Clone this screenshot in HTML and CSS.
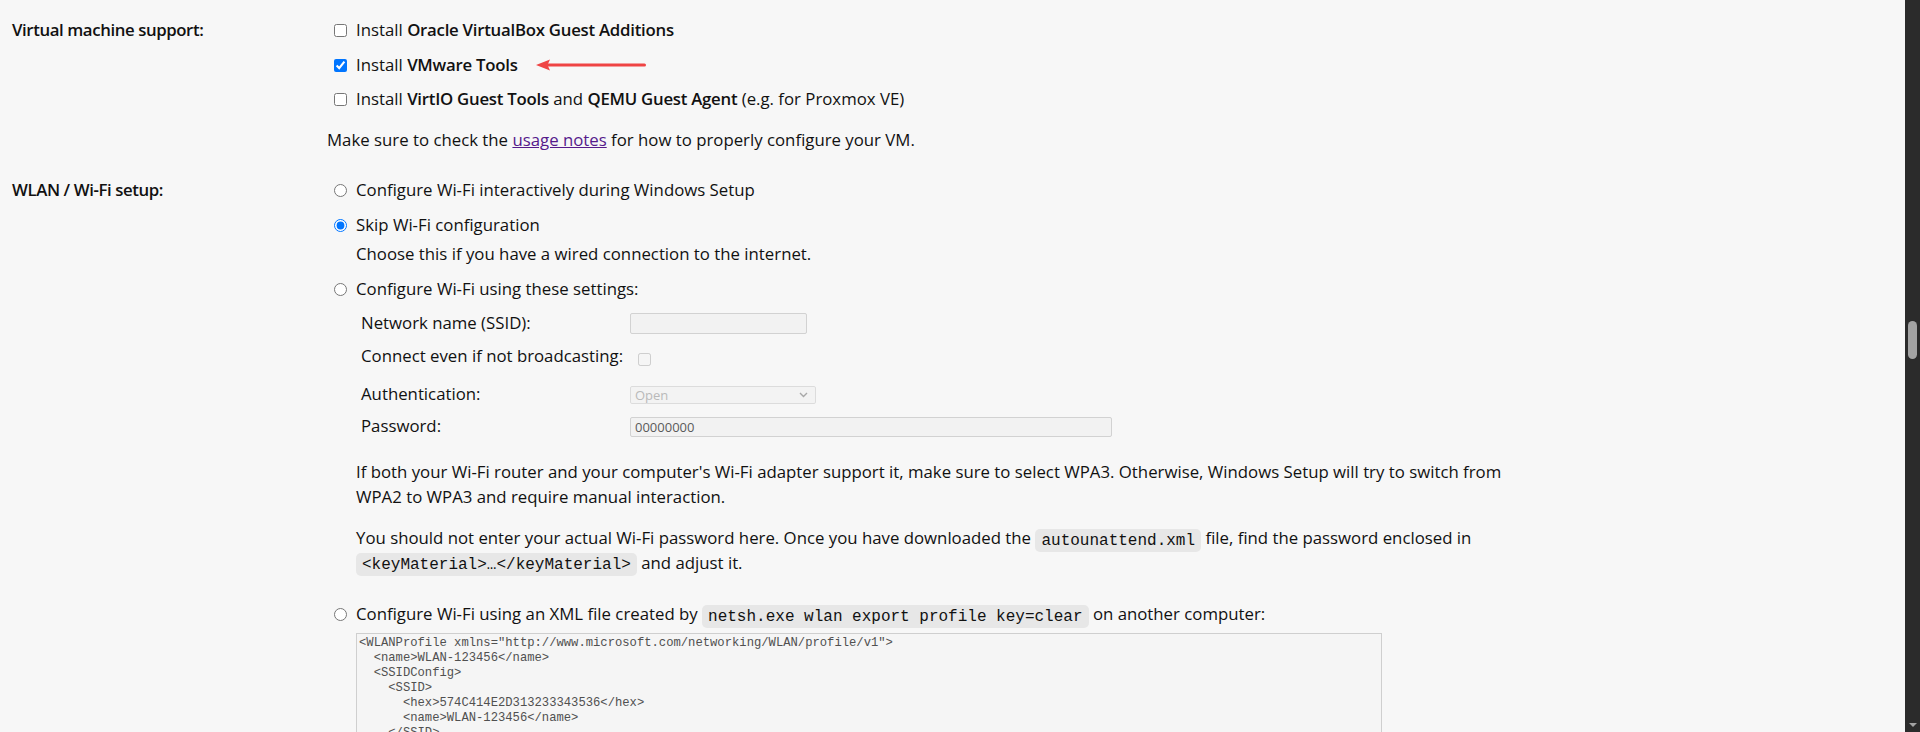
FILE: index.html
```html
<!DOCTYPE html>
<html lang="en">
<head>
<meta charset="utf-8">
<title>Windows answer file settings</title>
<link rel="stylesheet" href="styles.css">
</head>
<body>
<div class="window">
  <main class="page">
    <section class="setting vm">
      <div class="label">Virtual machine support:</div>
      <div class="content">
        <label class="opt"><input type="checkbox"><span>Install <b>Oracle VirtualBox Guest Additions</b></span></label>
        <label class="opt"><input type="checkbox" checked><span>Install <b>VMware Tools</b></span><svg class="arrow" width="110" height="12" viewBox="0 0 110 12"><path d="M0 6 L14 0.5 L11.5 6 L14 11.5 Z" fill="#ef4444"/><line x1="11" y1="6" x2="108.5" y2="6" stroke="#ef4444" stroke-width="3" stroke-linecap="round"/></svg></label>
        <label class="opt"><input type="checkbox"><span>Install <b>VirtIO Guest Tools</b> and <b>QEMU Guest Agent</b> (e.g. for Proxmox VE)</span></label>
        <p class="note">Make sure to check the <a href="#usage">usage notes</a> for how to properly configure your VM.</p>
      </div>
    </section>
    <section class="setting wlan">
      <div class="label">WLAN / Wi‑Fi setup:</div>
      <div class="content">
        <label class="opt"><input type="radio" name="wifi"><span>Configure Wi‑Fi interactively during Windows Setup</span></label>
        <label class="opt"><input type="radio" name="wifi" checked><span>Skip Wi‑Fi configuration</span></label>
        <p class="sub">Choose this if you have a wired connection to the internet.</p>
        <label class="opt r3"><input type="radio" name="wifi"><span>Configure Wi‑Fi using these settings:</span></label>
        <div class="fields">
          <label class="f-label" for="ssid">Network name (SSID):</label>
          <input id="ssid" class="text ssid" type="text" disabled>
          <label class="f-label" for="bc">Connect even if not broadcasting:</label>
          <input id="bc" class="bcast" type="checkbox" disabled>
          <label class="f-label" for="auth">Authentication:</label>
          <div class="select-wrap">
            <select id="auth" class="auth" disabled><option>Open</option></select>
            <svg class="chev" width="9" height="6" viewBox="0 0 9 6"><path d="M1 1 L4.5 4.5 L8 1" fill="none" stroke="#a8a8a8" stroke-width="1.4"/></svg>
          </div>
          <label class="f-label" for="pw">Password:</label>
          <input id="pw" class="text pw" type="text" value="00000000" disabled>
        </div>
        <p class="sub para p1">If both your Wi‑Fi router and your computer's Wi‑Fi adapter support it, make sure to select WPA3. Otherwise, Windows Setup will try to switch from WPA2 to WPA3 and require manual interaction.</p>
        <p class="sub para p2">You should not enter your actual Wi‑Fi password here. Once you have downloaded the <code>autounattend.xml</code> file, find the password enclosed in <code>&lt;keyMaterial&gt;…&lt;/keyMaterial&gt;</code> and adjust it.</p>
        <label class="opt r4"><input type="radio" name="wifi"><span>Configure Wi‑Fi using an XML file created by <code>netsh.exe wlan export profile key=clear</code> on another computer:</span></label>
        <textarea class="xml" disabled spellcheck="false">&lt;WLANProfile xmlns="http://www.microsoft.com/networking/WLAN/profile/v1"&gt;
  &lt;name&gt;WLAN-123456&lt;/name&gt;
  &lt;SSIDConfig&gt;
    &lt;SSID&gt;
      &lt;hex&gt;574C414E2D313233343536&lt;/hex&gt;
      &lt;name&gt;WLAN-123456&lt;/name&gt;
    &lt;/SSID&gt;
  &lt;/SSIDConfig&gt;
  &lt;connectionType&gt;ESS&lt;/connectionType&gt;
  &lt;connectionMode&gt;auto&lt;/connectionMode&gt;
&lt;/WLANProfile&gt;</textarea>
      </div>
    </section>
  </main>
  <div class="scrollbar"><div class="thumb"></div><div class="down"></div></div>
</div>
</body>
</html>
```

FILE: styles.css
```css
* { box-sizing: border-box; }
html, body { margin: 0; height: 100%; }
body {
  background: #f7f7f7;
  color: #111;
  font-family: "Open Sans", "Noto Sans", sans-serif;
  font-size: 16.8px;
  overflow: hidden;
}
.window { display: flex; height: 732px; }
.page { flex: 1; min-width: 0; padding-left: 12px; overflow: hidden; }

.setting { display: grid; grid-template-columns: 315px 1fr; }
.vm { padding-top: 13.3px; padding-bottom: 6.5px; }
.wlan { padding-top: 14px; }
.label { font-weight: 600; line-height: 34.5px; letter-spacing: -0.4px; }
.content { max-width: 1200px; }
b { font-weight: 600; letter-spacing: -0.25px; }

.opt { display: flex; align-items: center; gap: 9px; padding-left: 7px; line-height: 34.5px; }
.opt input { margin: 0; width: 13px; height: 13px; flex: none; }
.arrow { margin-left: 9px; flex: none; }

.note { margin: 11.5px 0 0; line-height: 24.5px; }
.note a { color: #551a8b; }

.sub { margin: 0; padding-left: 29px; line-height: 24.5px; }
.r3 { margin-top: 5.5px; }

.fields {
  margin-top: 6.5px;
  padding-left: 34px;
  display: grid;
  grid-template-columns: 269px auto;
  grid-template-rows: 33px 38px 32px 21px;
  align-items: start;
  justify-items: start;
}
.f-label { line-height: 20px; }
.text {
  border: 1px solid #d2d2d2;
  background: #f2f2f2;
  border-radius: 2px;
  font-family: "Open Sans", sans-serif;
  font-size: 13px;
  color: #5a5a5a;
  padding: 0 4px;
}
.ssid { width: 177px; height: 21px; }
.pw { width: 482px; height: 20px; margin-top: 1px; }
.bcast { margin: 7px 0 0 8px; width: 13px; height: 13px; }
.select-wrap { position: relative; margin-top: 2px; }
.auth {
  appearance: none;
  width: 186px; height: 18px;
  border: 1px solid #d2d2d2;
  background: #f2f2f2;
  border-radius: 2px;
  font-family: "Open Sans", sans-serif;
  font-size: 13px;
  line-height: 16px;
  color: #a0a0a0;
  padding: 0 4px;
  display: block;
}
.chev { position: absolute; right: 8px; top: 6px; }

.p1 { margin-top: 23px; }
.p2 { margin-top: 17px; }
code {
  font-family: "Liberation Mono", "DejaVu Sans Mono", monospace;
  font-size: 16px;
  line-height: 1;
  background: #e7e7e7;
  border-radius: 5px;
  padding: 2.5px 6px;
  white-space: nowrap;
}
.r4 { margin-top: 22px; }
.xml {
  display: block;
  margin: 1.5px 0 0 29px;
  width: 1026px;
  height: 200px;
  border: 1px solid #cfcfcf;
  background: #f5f5f5;
  color: #505050;
  font-family: "Liberation Mono", "DejaVu Sans Mono", monospace;
  font-size: 12.2px;
  line-height: 15px;
  padding: 2px 2px;
  resize: none;
  overflow: hidden;
  white-space: pre;
}

.scrollbar {
  width: 15px; flex: none;
  background: #2b2b2b;
  display: flex; flex-direction: column; align-items: center;
}
.thumb { width: 9px; height: 38px; margin-top: 321px; border-radius: 5px; background: #a3a3a3; }
.down {
  margin-top: auto; margin-bottom: 5px;
  width: 0; height: 0;
  border-left: 4px solid transparent;
  border-right: 4px solid transparent;
  border-top: 4px solid #a3a3a3;
}
```
